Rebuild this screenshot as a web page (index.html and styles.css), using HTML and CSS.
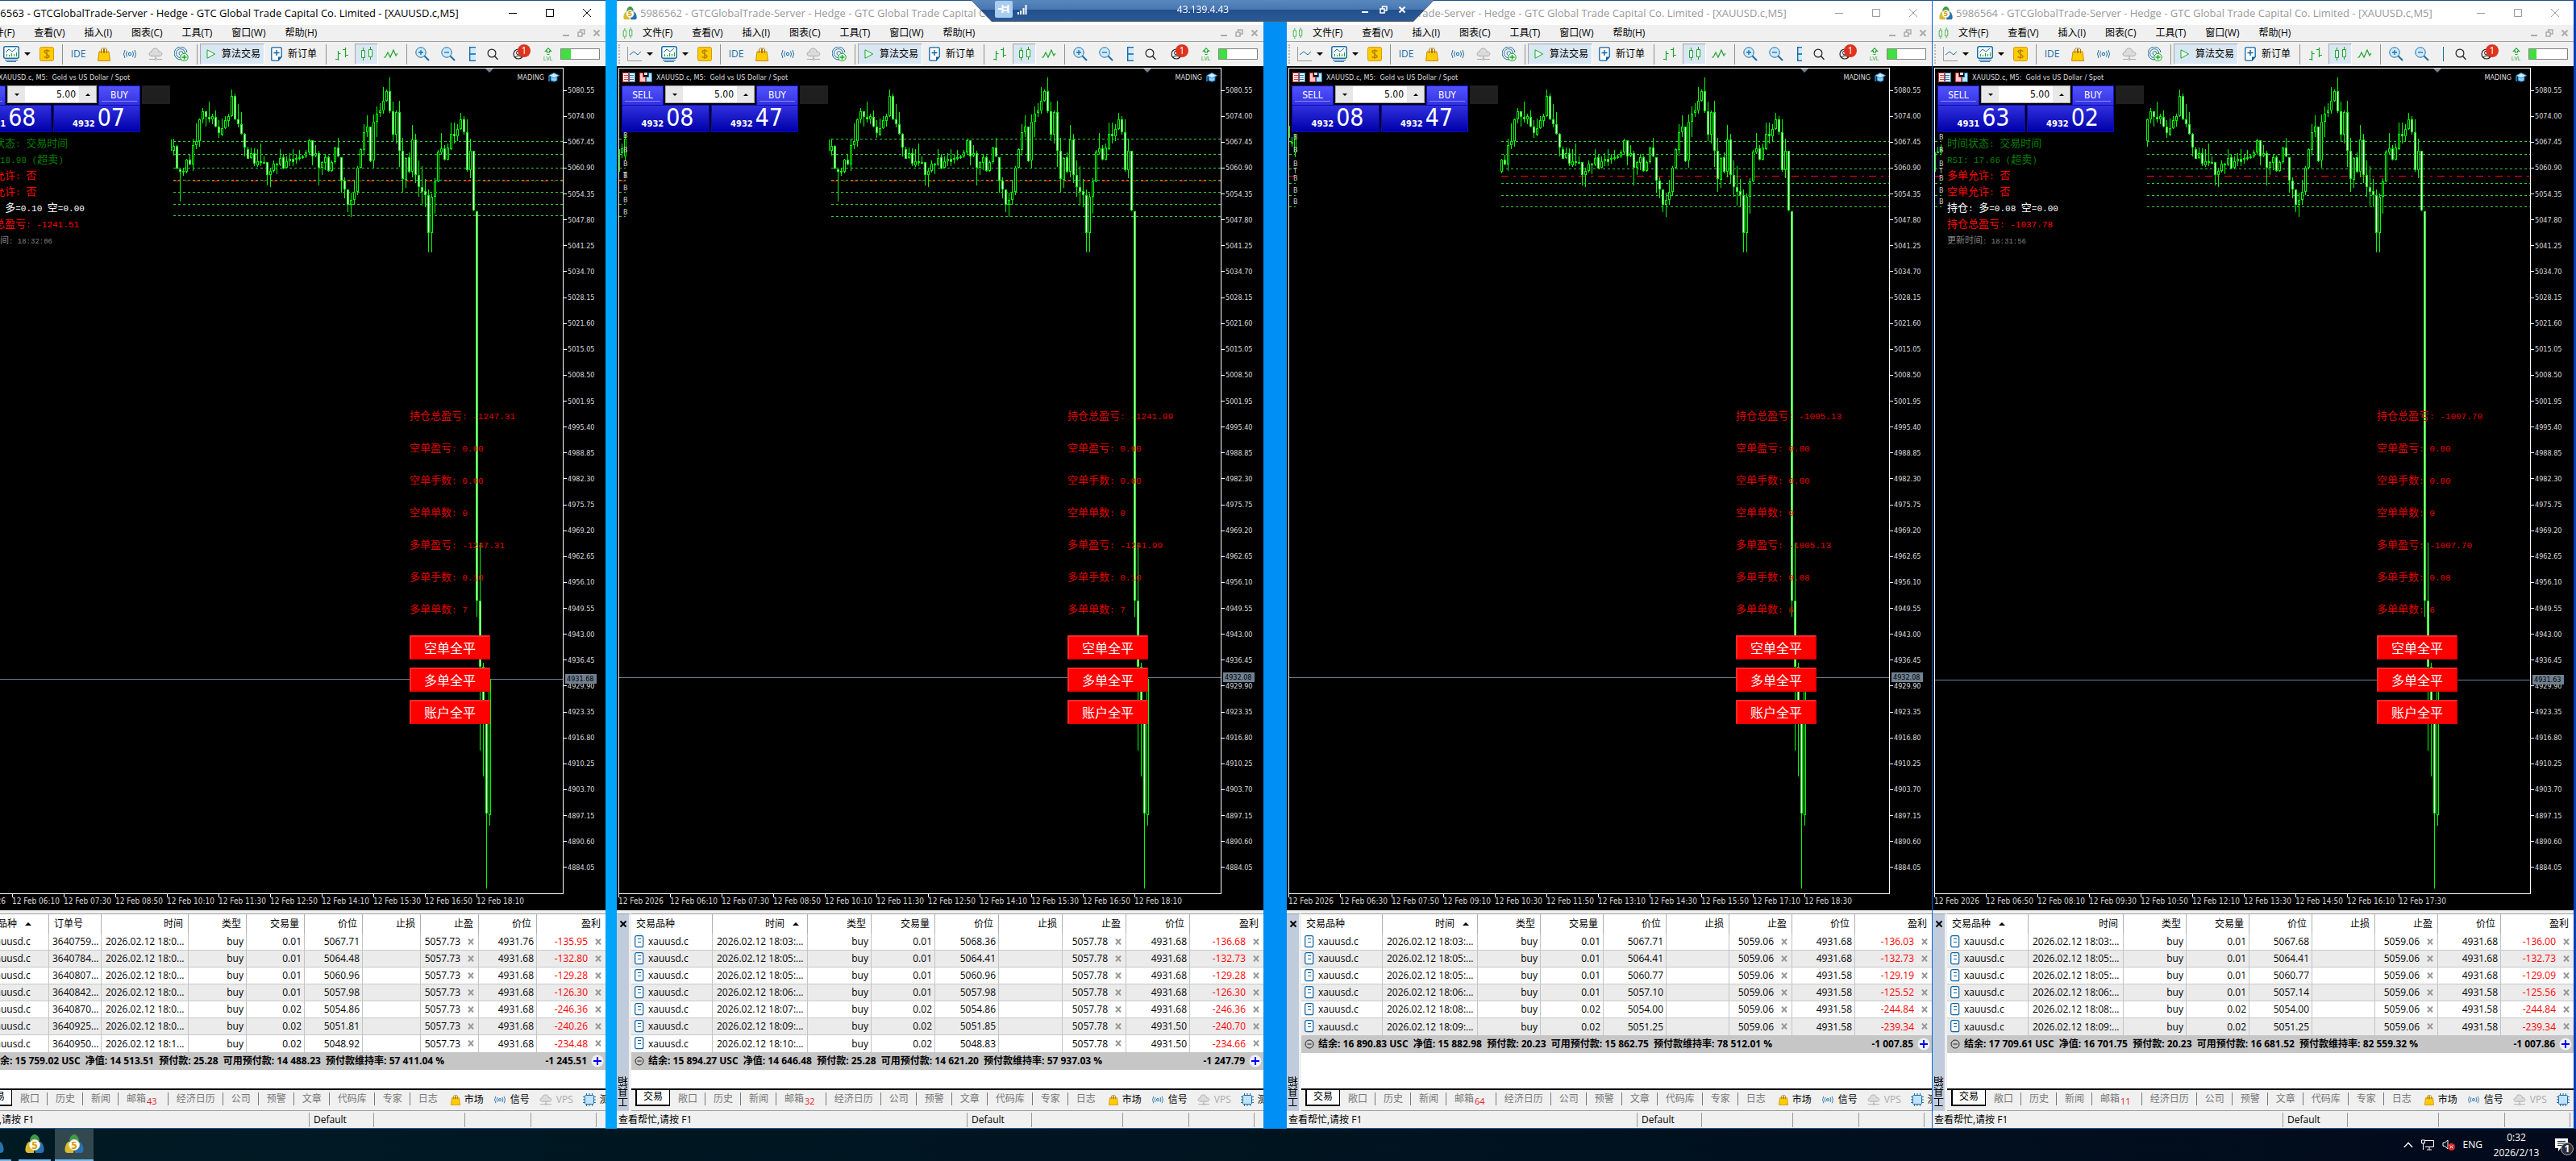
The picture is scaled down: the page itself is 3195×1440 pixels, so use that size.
FILE: index.html
```html
<!DOCTYPE html>
<html lang="zh-CN">
<head>
<meta charset="utf-8">
<title>MetaTrader 5</title>
<link rel="stylesheet" href="styles.css">
</head>
<body>
<svg class="sprite" aria-hidden="true">
  <symbol id="i-logo" viewBox="0 0 24 24"><path d="M12 0c3 0 6 4 6 8l-6 5-6-5c0-4 3-8 6-8z" fill="#3f9a49"/><path d="M5 9l7 4-1 10H4c-4 0-4-4-3-8 1-3 2-5 4-6z" fill="#d9bb2c"/><path d="M19 9l-7 4 1 10h7c4 0 4-4 3-8-1-3-2-5-4-6z" fill="#2673b0"/><circle cx="12" cy="13" r="6.500" fill="#fff" stroke="#e3d9b0"/><text x="12" y="17.500" text-anchor="middle" font-size="13" font-weight="700" font-family="Open Sans" fill="#d99a00">5</text></symbol>
  <symbol id="i-candles" viewBox="0 0 16 18"><path d="M3.500 1v3m0 10v3M12.500 0v3m0 10v3" stroke="#1aa52b" fill="none"/><path d="M1.500 4.500h4v9h-4zM10.500 3.500h4v9h-4z" stroke="#1aa52b" fill="#fff"/></symbol>
  <symbol id="i-line" viewBox="0 0 18 18"><path d="M.5 0v17.500H18" stroke="#9a9a9a" fill="none"/><path d="M3 10l5-4 5 4 4-4" stroke="#1c6ea4" fill="none"/></symbol>
  <symbol id="i-ind" viewBox="0 0 20 20"><path d="M4 19.500h12M2 17.500h16" stroke="#1c6ea4"/><rect x=".75" y=".75" width="18.500" height="14.500" rx="2" fill="#fff" stroke="#1c6ea4" stroke-width="1.500"/><path d="M3 8l4-4 4 3 5-4" stroke="#1c6ea4" fill="none"/><path d="M4.500 13v-3m3 3v-2m3 2V9m3 4v-3m3 3V8" stroke="#1aa52b"/></symbol>
  <symbol id="i-dollar" viewBox="0 0 18 18"><rect x=".5" y=".5" width="17" height="17" rx="2" fill="#ffcc00" stroke="#d79a00"/><path d="M12 6c0-2-6-2-6 0s6 4 6 6-6 2-6 0M9 3v12" stroke="#b97f00" fill="none" stroke-width="1.400"/></symbol>
  <symbol id="i-bag" viewBox="0 0 16 18"><path d="M2 6h12l1.500 11.500H.5z" fill="#ffcc00" stroke="#c98a00"/><path d="M4.500 8V3q2-3 4 0v5M7.500 8V3q2-3 4 0v5" fill="none" stroke="#a87200"/></symbol>
  <symbol id="i-signal" viewBox="0 0 18 14"><circle cx="9" cy="7" r="1.800" fill="#bfe3fb" stroke="#1c6ea4"/><path d="M5.500 3.500q-2 3.500 0 7M3 2q-3 5 0 10M12.500 3.500q2 3.500 0 7M15 2q3 5 0 10" fill="none" stroke="#1c6ea4"/></symbol>
  <symbol id="i-cloud" viewBox="0 0 18 16"><path d="M4 10.500c-4 0-4-5 0-5 0-6 9-6 9 0 5-1 5 5 1 5z" fill="#dcdcdc" stroke="#a9a9a9"/><path d="M9 10v5M1 14.500h16" stroke="#a9a9a9"/><circle cx="9" cy="14.500" r="1.300" fill="#eee" stroke="#a9a9a9"/></symbol>
  <symbol id="i-radar" viewBox="0 0 18 18"><g fill="none" stroke="#1c6ea4"><path d="M9 16A8 8 0 1 1 16 7"/><path d="M7 13.500A5.500 5.500 0 1 1 13.500 8"/><path d="M7.500 10.500A2.500 2.500 0 1 1 11 8"/></g><circle cx="12.500" cy="13" r="4.700" fill="#e6ffe6" stroke="#1aa52b"/><path d="M12.500 10v6M9.500 13h6" stroke="#1aa52b" stroke-width="1.400"/></symbol>
  <symbol id="i-play" viewBox="0 0 12 12"><path d="M1 .8l9.500 5.200L1 11.200z" fill="#effff0" stroke="#1aa52b"/></symbol>
  <symbol id="i-new" viewBox="0 0 14 18"><path d="M2 .8h10q1.200 0 1.200 1.200v10.500l-4 4.700H2q-1.200 0-1.200-1.200V2Q.8.8 2 .8z" fill="#fff" stroke="#0b63a5" stroke-width="1.300"/><path d="M13 12.500H9V17z" fill="#0b63a5"/><path d="M7 4v7M3.500 7.500h7" stroke="#0b63a5" stroke-width="1.400"/></symbol>
  <symbol id="i-bars" viewBox="0 0 18 18"><path d="M4.500 5v12M4.500 8.500h3M1 15.500h3.500M13.500 1v12M10 3.500h3.500M13.500 10.500H17" stroke="#1aa52b" fill="none" stroke-width="1.200"/></symbol>
  <symbol id="i-wave" viewBox="0 0 18 12"><path d="M0 10h2l3-6 3 6 4-9 3 7 2-3" stroke="#1aa52b" fill="none" stroke-width="1.200"/></symbol>
  <symbol id="i-zin" viewBox="0 0 18 18"><path d="M11 11l6 6" stroke="#1c6ea4" stroke-width="2"/><circle cx="7" cy="7" r="6.200" fill="#cfeaff" stroke="#1c6ea4"/><path d="M7 4v6M4 7h6" stroke="#1c6ea4" stroke-width="1.300"/></symbol>
  <symbol id="i-zout" viewBox="0 0 18 18"><path d="M11 11l6 6" stroke="#1c6ea4" stroke-width="2"/><circle cx="7" cy="7" r="6.200" fill="#cfeaff" stroke="#1c6ea4"/><path d="M4 7h6" stroke="#1c6ea4" stroke-width="1.300"/></symbol>
  <symbol id="i-tile" viewBox="0 0 10 18"><path d="M.7.7h8.600v16.600H.7zM.7 9h8.600" fill="#cfeaff" stroke="#0b63a5" stroke-width="1.300"/></symbol>
  <symbol id="i-search" viewBox="0 0 14 14"><circle cx="6" cy="6" r="4.900" fill="none" stroke="#222" stroke-width="1.200"/><path d="M9.500 9.500L13.500 14" stroke="#222" stroke-width="1.400"/></symbol>
  <symbol id="i-user" viewBox="0 0 14 14"><circle cx="7" cy="7" r="6" fill="none" stroke="#222" stroke-width="1.200"/><circle cx="7" cy="5.500" r="2.500" fill="none" stroke="#222"/><path d="M3 11q4-4 8 0" fill="none" stroke="#222"/></symbol>
  <symbol id="i-up" viewBox="0 0 10 10"><path d="M5 .8l3.600 3.600H6.500V6h-3V4.400H1.400z" fill="none" stroke="#1aa52b" stroke-width="1.100"/><path d="M3.500 8.500h3" stroke="#1aa52b"/></symbol>
  <symbol id="i-book" viewBox="0 0 16 12"><path fill="#fff" d="M0 0h16v12H0z"/><path d="M.5.500h7v11h-7zM2 3.500h5M2 6h5M2 8.500h5" stroke="#d33" fill="none"/><path d="M8.500.5h7v11h-7zM9 3.500h5M9 6h5M9 8.500h5" stroke="#1c6ea4" fill="none"/></symbol>
  <symbol id="i-trade" viewBox="0 0 16 12"><path d="M.5.500h4v5h3v6h-7z" fill="#ffc9c9" stroke="#d33"/><path d="M15.500.500h-4v5h-3v6h7z" fill="#bfe3fb" stroke="#1c6ea4"/><path d="M6 0h4v3H6z" fill="#ddd"/></symbol>
  <symbol id="i-hat" viewBox="0 0 14 12"><path d="M3 5v5q4.500 2.500 8 0V5z" fill="#8fd0fa" stroke="#0b63a5"/><path d="M7 .5l6.500 3.200L7 7 .8 3.700z" fill="#cfeaff" stroke="#2b8fd0"/><path d="M1 4v7" stroke="#2b8fd0" stroke-width="1.500"/></symbol>
  <symbol id="i-doc" viewBox="0 0 12 16"><rect x=".7" y=".7" width="10" height="14" rx="2" fill="#fff" stroke="#0b63a5" stroke-width="1.200"/><path d="M4 4.500h4M4 8.500h4" stroke="#0b63a5"/></symbol>
  <symbol id="i-x" viewBox="0 0 8 8"><path d="M1 .5l6 7M7 .5l-6 7" stroke="currentColor" stroke-width="2"/></symbol>
  <symbol id="i-plus" viewBox="0 0 16 16"><circle cx="8" cy="8" r="7.500" fill="#eef0f8"/><path d="M8 3v10M3 8h10" stroke="#0000f0" stroke-width="2"/></symbol>
  <symbol id="i-minus" viewBox="0 0 12 12"><circle cx="6" cy="6" r="5" fill="none" stroke="#222"/><path d="M3.500 6h5" stroke="#222"/></symbol>
  <symbol id="i-chip" viewBox="0 0 16 16"><path d="M4.500 0v16M8 0v16M11.500 0v16M0 4.500h16M0 8h16M0 11.500h16" stroke="#1c6ea4"/><rect x="2.500" y="2.500" width="11" height="11" rx="1" fill="#bfe3fb" stroke="#1c6ea4"/></symbol>
  <symbol id="w-min" viewBox="0 0 10 10"><path d="M0 5.500h10" stroke="currentColor"/></symbol>
  <symbol id="w-max" viewBox="0 0 10 10"><path d="M.5.500h9v9h-9z" stroke="currentColor" fill="none"/></symbol>
  <symbol id="w-close" viewBox="0 0 10 10"><path d="M0 0l10 10M10 0L0 10" stroke="currentColor"/></symbol>
  <symbol id="w-restore" viewBox="0 0 10 10"><path d="M1 4h5v5H1zM3.500 4V1H9v5H6" stroke="currentColor" stroke-width="1.500" fill="none"/></symbol>
  <symbol id="w-minb" viewBox="0 0 10 10"><path d="M1 8h8" stroke="currentColor" stroke-width="2"/></symbol>
  <symbol id="w-closeb" viewBox="0 0 10 10"><path d="M1.500 1.500l7 7M8.500 1.500l-7 7" stroke="currentColor" stroke-width="2"/></symbol>
  <symbol id="i-pin" viewBox="0 0 14 12"><path d="M0 6h5M5.500 1v10M6 4h6v4H6M12.500 1v10" stroke="#fff" stroke-width="2" fill="none"/></symbol>
  <symbol id="i-strength" viewBox="0 0 12 12"><path d="M1 12V9M4 12V7M7.500 12V4M10.500 12V0" stroke="#fff" stroke-width="2"/></symbol>
  <symbol id="t-up" viewBox="0 0 12 8"><path d="M.8 7L6 1.500 11.200 7" stroke="#fff" fill="none" stroke-width="1.300"/></symbol>
  <symbol id="t-net" viewBox="0 0 16 14"><path d="M4 1.500h11.500v8H5M10 10v3M7 13h6M.5 1h4v4h-4zM2.500 5v8" stroke="#fff" fill="none"/></symbol>
  <symbol id="t-vol" viewBox="0 0 16 14"><path d="M1 4.500h2l4-3.500v11L3 8.500H1z" stroke="#fff" fill="none"/><circle cx="11.500" cy="9.500" r="4.500" fill="#d92b2b"/><path d="M9.700 7.700l3.600 3.600m0-3.600l-3.600 3.600" stroke="#fff"/></symbol>
  <symbol id="t-note" viewBox="0 0 16 16"><path d="M0 0h16v12H7l-3 4v-4H0z" fill="#fff"/><path d="M3 3.500h10M3 6h10M3 8.500h7" stroke="#0a1220"/></symbol>
</svg>

<main class="desktop" id="desktop"></main>

<div class="rdp">
  <div class="rdp-bar">
    <button class="rdp-pin" aria-label="固定"><svg width="14" height="12"><use href="#i-pin"/></svg></button>
    <svg class="rdp-sig" width="12" height="12"><use href="#i-strength"/></svg>
    <span class="rdp-ip">43.139.4.43</span>
    <button aria-label="最小化"><svg width="10" height="10"><use href="#w-minb"/></svg></button>
    <button aria-label="还原"><svg width="10" height="10"><use href="#w-restore"/></svg></button>
    <button aria-label="关闭"><svg width="10" height="10"><use href="#w-closeb"/></svg></button>
  </div>
</div>

<footer class="taskbar">
  <button class="task task-cut" aria-label="MetaTrader 5"><svg width="24" height="24"><use href="#i-logo"/></svg></button>
  <button class="task" aria-label="MetaTrader 5"><svg width="24" height="24"><use href="#i-logo"/></svg></button>
  <button class="task task-on" aria-label="MetaTrader 5"><svg width="24" height="24"><use href="#i-logo"/></svg></button>
  <div class="tray">
    <svg width="12" height="8"><use href="#t-up"/></svg>
    <svg width="16" height="14"><use href="#t-net"/></svg>
    <svg width="16" height="14"><use href="#t-vol"/></svg>
    <span>ENG</span>
    <div class="clock"><time>0:32</time><span>2026/2/13</span></div>
    <div class="note"><svg width="16" height="16"><use href="#t-note"/></svg><b>1</b></div>
  </div>
</footer>
<script src="app.js"></script>
</body>
</html>
```
FILE: styles.css
```css
* { box-sizing: border-box; }
body {
  margin: 0; height: 100vh; overflow: hidden; display: flex; flex-direction: column;
  font: 12px/16px "Open Sans", "Noto Sans CJK SC", sans-serif; color: #000; background: #001722;
}
button { font: inherit; color: inherit; background: none; border: 0; padding: 0; flex: none; }
svg { flex: none; display: block; }
.sprite { position: absolute; width: 0; height: 0; }

.desktop {
  flex: 1; min-height: 0; display: flex; padding-right: 3px; overflow: hidden;
  background: linear-gradient(90deg, #00a8ff 0, #00a4fa 24%, #008ff5 50%, #0a3fb8 100%);
}
.win {
  flex: 802 1 0; min-width: 0; display: flex; flex-direction: column; overflow: hidden;
  background: #f0f0f0; border-top: 1px solid #1f4f86; border-bottom: 1px solid #1f5f96;
}
.win-1 { margin: 0 14px 0 -51px; }
.win-2 { margin-right: 29px; }
.win-3 { flex-grow: 800; margin-right: 1px; }
.win-4 { flex-grow: 795; }

.title { display: flex; align-items: center; height: 30px; background: #fff; color: #999; padding-left: 8px; }
.win-1 .title { color: #000; }
.title h1 { flex: 1; margin: 0 0 0 4px; font-size: 13px; line-height: 20px; font-weight: 400; white-space: nowrap; overflow: hidden; }
.title button { width: 46px; height: 30px; display: grid; place-items: center; }

.menu { display: flex; align-items: center; gap: 24px; height: 21px; padding-left: 7px; border-bottom: 1px solid #a0a0a0; }
.menu > svg { margin-right: -12px; }
.menu .mdi { margin-left: auto; display: flex; gap: 9px; padding-right: 6px; color: #aaa; }

.tools { display: flex; height: 30px; background: #f0f0f0; }
.tools-main { flex: 1; min-width: 0; overflow: hidden; display: flex; align-items: center; padding-left: 8px; }
.tools-main::before { content: ""; flex: none; width: 0; height: 24px; margin: 0 3px 0 -6px; border-left: 2px dotted #bbb; }
.tb { height: 26px; display: flex; align-items: center; justify-content: center; width: 32px; color: #1c6ea4; }
.tb-drop { width: 43px; gap: 6px; }
.tb-drop::after { content: ""; border: 4px solid transparent; border-top-color: #000; border-bottom: 0; }
.tb-text { width: auto; gap: 7px; color: #000; padding: 0 8px; white-space: nowrap; }
.tb-on { background: #d9e6f3; border: 1px solid #a8a8a8; border-right-color: #fff; border-bottom-color: #fff; }
.tb-text.tb-on { padding: 0 4px 0 7px; }
.tb-narrow { width: 29px; }
.sep { flex: none; width: 1px; height: 25px; background: #909090; margin: 0 3px; }
.tools-side { flex: none; width: 161px; display: flex; align-items: center; padding: 0 7px 0 14px; }
.tools-side .who { position: relative; margin-left: 18px; width: 22px; }
.tools-side .who b { position: absolute; left: 6px; top: -5px; width: 16px; height: 16px; border-radius: 8px; background: #e0321e; color: #fff; font-weight: 400; text-align: center; }
.lvl { display: grid; justify-items: center; margin-left: 14px; width: 15px; color: #1aa52b; font-size: 7px; line-height: 7px; }
.gauge { margin-left: auto; width: 49px; height: 14px; border: 1px solid #808080; background: #fff; }
.gauge i { display: block; height: 100%; background: #40e040; }

.chart {
  flex: 1; min-height: 0; background: #000; color: #ddd; padding: 2px 0 0 2px;
  display: grid; grid-template: 1fr 20px / 1fr 52px;
  font: 9px/12px "DejaVu Sans Condensed", "Noto Sans CJK SC", sans-serif; overflow: hidden;
}
.win-4 .chart { grid-template-columns: 1fr 53px; }
.frame { position: relative; border: 1px solid #fff; min-height: 0; }
.plot { position: absolute; inset: 0; width: 100%; height: 100%; }
.plot text { font: 9px "DejaVu Sans Condensed", sans-serif; fill: #ccc; }
.plot .g { stroke: #32cd32; stroke-dasharray: 3 3; }
.plot .r { stroke: #f00; stroke-dasharray: 9 6 3 6; }
.plot .now { stroke: #708090; }
.plot .c { stroke: #0f0; fill: #000; }
.plot .f { fill: #fff; }
.chead { position: absolute; left: 4px; right: 4px; top: 4px; display: flex; align-items: center; gap: 5px; height: 14px; }
.chead .sym { white-space: pre; }
.chead .ea { margin-left: auto; }
.order { position: absolute; left: 3px; top: 21px; display: flex; gap: 2px; align-items: flex-start; }
.ticket { display: grid; grid-template-columns: 52px minmax(0, 1fr) 52px; width: 219px; color: #fff; font-size: 12px; }
.ticket > button { height: 24px; background: linear-gradient(#5252ff, #3232e0); border: 1px solid #1414c0; border-bottom: 0; }
.ticket > button::after { content: ""; display: block; margin: 1px 3px 0; border-bottom: 1px solid #8a8aff; }
.spin { display: flex; height: 22px; margin: 0 2px; border: 1px solid #aaa; min-width: 0; }
.spin button { width: 21px; background: #e8e8e8; display: grid; place-items: center; }
.spin button::after { content: ""; border: 3px solid transparent; border-top-color: #000; border-bottom: 0; }
.spin .inc::after { transform: rotate(180deg); }
.spin input { flex: 1; width: 0; min-width: 0; border: 0; padding: 0 4px; text-align: right; font: 12px "DejaVu Sans Condensed", sans-serif; }
.quotes { grid-column: 1 / -1; display: grid; grid-template-columns: 1fr 1fr; gap: 2px; }
.quotes div { height: 34px; background: linear-gradient(#3030e0, #0000a8); border: 1px solid #0a0ab4; display: flex; align-items: flex-end; justify-content: flex-end; gap: 3px; padding: 0 18px 3px 0; }
.quotes b { font-size: 11px; line-height: 13px; }
.quotes span { font-size: 30px; line-height: 28px; }
.stub { width: 35px; height: 23px; background: #1f1f1f; }
.info { position: absolute; left: 15px; top: 82px; font: 13px/20px "Noto Sans CJK SC", sans-serif; color: #f00; white-space: pre; }
.info p, .stats p { margin: 0; height: 20px; }
.info .ok { color: #008000; }
.info .pos { color: #fff; }
.info .upd { color: #808080; font-size: 11px; }
.info .upd .m { font-size: 9px; }
.m { font-family: "Liberation Mono", monospace; font-size: 11px; }
.stats { position: absolute; right: 90px; top: 420px; width: 100px; color: #e00000; font: 13px/20px "Noto Sans CJK SC", sans-serif; white-space: pre; display: grid; gap: 20px; }
.acts { position: absolute; right: 90px; top: 703px; width: 100px; display: grid; gap: 10px; }
.acts button { height: 30px; background: #f00; border: 2px solid #e80000; border-left-color: #ff2a2a; border-top-color: #ff2a2a; color: #fff; font: 16px/20px "Noto Sans CJK SC", sans-serif; }
.axis { position: relative; margin: 0; padding: 22px 0 27px; list-style: none; display: flex; flex-direction: column; justify-content: space-between; }
.axis li { display: flex; align-items: center; gap: 1px; }
.axis li::before { content: ""; width: 4px; height: 1px; background: #fff; }
.axis .tag { position: absolute; left: 2px; padding: 0 2px; background: #708090; color: #000; height: 12px; width: 39px; }
.days { grid-column: 1 / -1; margin: 0; padding: 0; list-style: none; display: flex; font-size: 10px; }
.days li { flex: none; width: 64px; padding-top: 3px; position: relative; white-space: nowrap; }
.days li::before { content: ""; position: absolute; left: 0; top: 0; height: 4px; border-left: 1px solid #fff; }

.box { flex: none; display: grid; grid-template-columns: 18px 1fr; height: 249px; padding-top: 4px; }
.rail { border-top: 1px solid #a0a0a0; background: #c0ccdc; border-right: 3px solid #f0f0f0; display: flex; flex-direction: column; align-items: center; justify-content: space-between; padding: 7px 0 4px; }
.rail span { writing-mode: vertical-rl; transform: rotate(180deg); font-size: 13px; }
.pane { min-width: 0; overflow: hidden; background: #fff; border-top: 1px solid #a0a0a0; display: flex; flex-direction: column; }
table { width: 100%; table-layout: fixed; border-collapse: separate; border-spacing: 0; }
th { height: 24px; font-weight: 400; text-align: right; padding: 0 6px 0 6px; border-right: 1px solid #b0b0b0; white-space: nowrap; }
th:first-child, th.l { text-align: left; }
th i { display: inline-block; margin: 0 4px 2px 10px; border: 4px solid transparent; border-bottom-color: #000; border-top: 0; }
td { height: 21px; line-height: 20px; padding: 0 3px 0 4px; text-align: right; border-right: 1px solid #c4c4c4; border-bottom: 1px solid #c8c8c8; white-space: nowrap; overflow: hidden; }
td.l { text-align: left; }
td.dt { padding-left: 5px; }
th:last-child, td:last-child { border-right: 0; }
tbody tr:nth-child(even) { background: #ebebeb; }
tbody tr:last-child td { border-bottom: 0; }
td svg { display: inline-block; vertical-align: middle; color: #999; }
td .doc { margin: 0 5px 2px 0; }
td .del { margin: 0 2px 2px 9px; }
td.loss { color: #f00; }
.sum { height: 22px; flex: none; display: flex; align-items: center; gap: 5px; padding: 0 2px 0 4px; background: #c6c6c6; font-weight: 700; white-space: pre; }
.sum .tot { margin-left: auto; }
.tabs { flex: none; margin-top: auto; height: 28px; border-top: 2px solid #000; border-bottom: 1px solid #a0a0a0; background: #f0f0f0; display: flex; color: #777; padding-left: 5px; white-space: nowrap; overflow: hidden; }
.tabs button { height: 16px; margin-top: 3px; padding: 0 9px 0 10px; border-right: 1px solid #777; }
.tabs button.on { height: 22px; margin-top: -2px; padding: 0 8px; background: #fff; border: 2px solid #000; border-top: 0; border-width: 0 1px 2px 2px; color: #000; }
.tabs button.end { border-right: 0; padding-right: 16px; }
.tabs sub { color: #e02020; font-size: 11px; line-height: 11px; margin: 0 4px 0 1px; vertical-align: -3px; }
.tabs .svc { border: 0; padding: 0; margin: 4px 12px 0 0; display: flex; align-items: center; gap: 5px; color: #000; }
.tabs .off { color: #aaa; }
.status { flex: none; display: flex; height: 21px; align-items: center; padding-left: 2px; }
.status span { flex: none; height: 18px; line-height: 18px; padding-left: 5px; border-left: 1px solid #999; }
.status .hint { width: 432px; padding: 0; border: 0; }
.status .c1 { width: 80px; }
.status .c2 { width: 113px; }
.status .c3 { width: 82px; }
.status .c4 { width: 81px; }

.rdp { position: absolute; top: 0; left: 1205px; width: 573px; filter: drop-shadow(0 1px 0 #555); }
.rdp-bar {
  height: 26px; display: flex; align-items: center; padding: 0 34px 2px 29px; color: #fff; gap: 6px;
  clip-path: polygon(0 0, 100% 0, calc(100% - 25px) 100%, 25px 100%);
  background: linear-gradient(rgba(90, 140, 195, .94) 0, rgba(70, 120, 185, .94) 12px, rgba(32, 80, 145, .95) 12px, rgba(40, 90, 155, .95) 100%);
}
.rdp-pin { width: 22px; height: 21px; margin-top: -2px; background: #a9cdf0; border-radius: 2px; display: grid; place-items: center; }
.rdp-ip { flex: 1; text-align: center; margin-right: -22px; }
.rdp-bar button + button { margin-left: 7px; }

.taskbar { flex: none; height: 40px; display: flex; background: linear-gradient(90deg, #001a24 0, #001420 50%, #020a1c 100%); color: #fff; }
.task { width: 40px; margin-left: 9px; display: grid; place-items: center; border-bottom: 2px solid #76b9ed; }
.task-cut { width: 34px; margin-left: -20px; justify-items: start; padding-left: 1px; }
.task-on { width: 48px; margin-left: 5px; background: #33474f; }
.tray { margin-left: auto; display: flex; align-items: center; gap: 10px; padding-right: 4px; }
.clock { display: grid; justify-items: center; line-height: 19px; width: 60px; margin-left: 2px; }
.note { position: relative; width: 22px; margin-left: 8px; }
.note b { position: absolute; left: 7px; top: 5px; width: 16px; height: 16px; line-height: 14px; border-radius: 8px; border: 1px solid #aaa; background: #2b3038; text-align: center; }
```
FILE: app.js
```js
// Candles as "high,top,bottom,low" in thirds of a pixel; a trailing f marks a falling bar.
const CANDLES = `336,363,380,398 360,363,447,450f 445,449,458,570f 446,457,460,473 412,415,460,464 395,415,433,435f 337,360,433,455 280,346,361,375 262,265,346,365 222,235,265,280
235,235,256,290f 198,256,265,275f 243,253,265,281 230,256,291,293f 267,291,316,333f 262,298,320,327 253,268,298,300 243,253,270,292 152,177,253,255 168,177,265,267f
207,265,283,293f 237,283,318,320f 315,318,370,402f 367,375,410,412f 370,390,408,412 373,391,430,437f 376,420,435,440 353,420,425,438 402,423,427,430f 423,424,472,510f
445,457,472,516 418,430,457,462 427,430,433,467 375,408,433,437 393,406,447,450f 402,421,443,446 391,411,421,437 375,411,423,437f 394,409,413,430 379,406,412,417
396,402,406,412 378,388,402,408 336,343,388,397 342,343,403,435f 360,391,400,405 382,391,443,510f 420,424,443,470 394,406,427,453 399,406,457,459f 418,424,457,459
366,370,424,430 333,370,403,406f 405,406,492,537f 480,492,526,558f 525,526,583,608f 537,565,583,627 490,535,565,583 438,445,535,546 373,376,445,447 282,312,378,398
249,292,312,330 291,292,421,424f 247,273,418,445 216,243,273,330 204,231,241,255 144,195,231,243 153,159,195,198 108,159,235,239f 198,235,320,345f 231,237,320,354
195,237,382,440f 333,382,487,535f 405,408,490,518 388,406,460,465f 285,340,460,480 318,340,472,501f 418,472,516,552f 438,516,534,585f 487,530,547,590f 525,547,688,760f
541,553,688,760 484,496,553,615 378,384,496,499 315,373,386,394 361,373,415,418f 355,370,415,418 276,319,375,378 276,319,328,355f 282,301,328,345 240,265,301,303
252,265,313,322f 264,313,452,459f 336,382,452,483 382,382,604,606f 606,606,2055,2115f 1838,2055,2301,2613f 2286,2301,2460,2709f 2440,2460,2847,3125f 2346,2346,2852,2893`.split(/\s+/);

const D = '2026.02.12 18:';
const WINDOWS = [
  { id: '5986563', shift: 0, green: [90, 106, 123, 138, 153, 168, 182], red: 139, now: 757, tag: '4931.68', sell: ['4931', '68'], buy: ['4932', '07'], gauge: 12,
    strip: '', marks: [], first: '06:10', n: 10, pl: '-1247.31', lots: '0.10', cnt: '7', mail: '43',
    info: ['18.98', '0.10', '-1241.51', '18:32:06'], cols: [94, 65, 108, 72, 72, 72, 72, 72, 72], sort: 0, tp: '5057.73',
    rows: [['3640759...', '0...', '0.01', '5067.71', '4931.76', '-135.95'], ['3640784...', '0...', '0.01', '5064.48', '4931.68', '-132.80'], ['3640807...', '0...', '0.01', '5060.96', '4931.68', '-129.28'], ['3640842...', '0...', '0.01', '5057.98', '4931.68', '-126.30'], ['3640870...', '0...', '0.02', '5054.86', '4931.68', '-246.36'], ['3640925...', '0...', '0.02', '5051.81', '4931.68', '-240.26'], ['3640950...', '1...', '0.02', '5048.92', '4931.68', '-234.48']],
    sum: '结余: 15 759.02 USC  净值: 14 513.51  预付款: 25.28  可用预付款: 14 488.23  预付款维持率: 57 411.04 %', tot: '-1 245.51' },
  { id: '5986562', shift: 0, green: [87, 106, 123, 138, 153, 168, 183], red: 139, now: 755, tag: '4932.08', sell: ['4932', '08'], buy: ['4932', '47'], gauge: 10,
    strip: '0,100,128 3,93,111 7,81,115', marks: ['B83', 'B101', 'B118', 'T132', 'B133', 'B148', 'B163', 'B178'], first: '06:10', n: 10, pl: '-1241.99', lots: '0.10', cnt: '7', mail: '32',
    cols: [101, 118, 79, 79, 79, 79, 79, 79], sort: 1, tp: '5057.78',
    rows: [['03:...', '0.01', '5068.36', '4931.68', '-136.68'], ['05:...', '0.01', '5064.41', '4931.68', '-132.73'], ['05:...', '0.01', '5060.96', '4931.68', '-129.28'], ['06:...', '0.01', '5057.98', '4931.68', '-126.30'], ['07:...', '0.02', '5054.86', '4931.68', '-246.36'], ['09:...', '0.02', '5051.85', '4931.50', '-240.70'], ['10:...', '0.02', '5048.83', '4931.50', '-234.66']],
    sum: '结余: 15 894.27 USC  净值: 14 646.48  预付款: 25.28  可用预付款: 14 621.20  预付款维持率: 57 937.03 %', tot: '-1 247.79' },
  { id: '5941335', shift: 4, green: [90, 106, 124, 142, 157, 171], red: 133, now: 755, tag: '4932.08', sell: ['4932', '08'], buy: ['4932', '47'], gauge: 12,
    strip: '0,71,86 3,85,97 7,81,110', marks: ['B85', 'B101', 'B118', 'T127', 'B136', 'B151', 'B165'], first: '06:30', n: 10, pl: '-1005.13', lots: '0.08', cnt: '6', mail: '64',
    cols: [101, 118, 78, 78, 78, 78, 78, 78], sort: 1, tp: '5059.06',
    rows: [['03:...', '0.01', '5067.71', '4931.68', '-136.03'], ['05:...', '0.01', '5064.41', '4931.68', '-132.73'], ['05:...', '0.01', '5060.77', '4931.58', '-129.19'], ['06:...', '0.01', '5057.10', '4931.58', '-125.52'], ['08:...', '0.02', '5054.00', '4931.58', '-244.84'], ['09:...', '0.02', '5051.25', '4931.58', '-239.34']],
    sum: '结余: 16 890.83 USC  净值: 15 882.98  预付款: 20.23  可用预付款: 15 862.75  预付款维持率: 78 512.01 %', tot: '-1 007.85' },
  { id: '5986564', shift: 8, green: [90, 106, 124, 142, 157, 171], red: 133, now: 758, tag: '4931.63', sell: ['4931', '63'], buy: ['4932', '02'], gauge: 9,
    strip: '0,104,128 3,97,105 7,94,107', marks: ['B85', 'B101', 'B118', 'T127', 'B136', 'B151', 'B165'], first: '06:50', n: 9, pl: '-1007.70', lots: '0.08', cnt: '6', mail: '11',
    info: ['17.66', '0.08', '-1037.78', '18:31:56'], cols: [101, 118, 78, 78, 78, 78, 78, 78], sort: 0, tp: '5059.06',
    rows: [['03:...', '0.01', '5067.68', '4931.68', '-136.00'], ['05:...', '0.01', '5064.41', '4931.68', '-132.73'], ['05:...', '0.01', '5060.77', '4931.68', '-129.09'], ['06:...', '0.01', '5057.14', '4931.58', '-125.56'], ['08:...', '0.02', '5054.00', '4931.58', '-244.84'], ['09:...', '0.02', '5051.25', '4931.58', '-239.34']],
    sum: '结余: 17 709.61 USC  净值: 16 701.75  预付款: 20.23  可用预付款: 16 681.52  预付款维持率: 82 559.32 %', tot: '-1 007.86' },
];

const icon = (id, w, h, cls = '') => `<svg class="${cls}" width="${w}" height="${h}"><use href="#${id}"/></svg>`;
const mono = s => s.replace(/[\x20-\x7e]+/g, t => `<span class="m">${t}</span>`);
const tool = (label, inner, cls = '') => `<button class="tb ${cls}" aria-label="${label}">${inner}</button>`;
const SEP = '<i class="sep"></i>';

function candle(x, h, t, b, l, f) {
  return `<path class="c" d="M${x}.5 ${h}V${l}"/><rect class="c ${f ? 'f' : ''}" x="${x - 1}.5" y="${t}.5" width="2" height="${Math.max(1, b - t - 1)}"/>`;
}
function plot(w) {
  let s = '';
  const rule = (cls, y) => `<path class="${cls}" d="M0 ${y}.5H8"/><line class="${cls}" x1="263" x2="100%" y1="${y}.5" y2="${y}.5"/>`;
  w.green.forEach(y => s += rule('g', y));
  s += rule('r', w.red);
  s += `<line class="now" x1="0" x2="100%" y1="${w.now}.5" y2="${w.now}.5"/>`;
  if (!w.shift) s += '<path class="c" d="M260.500 88v14"/>';
  CANDLES.slice(w.shift).forEach((c, i) => {
    const v = c.replace('f', '').split(',').map(n => Math.round(n / 3) - 25);
    s += candle(263 + i * 4, ...v, c.endsWith('f'));
  });
  if (w.strip) w.strip.split(' ').forEach(c => {
    const [x, a, b] = c.split(',').map(Number);
    s += x ? candle(x, a, a + 6, b - 6, b, false) : `<path class="c" d="M.5 ${a}V${b}"/>`;
  });
  w.marks.forEach(m => s += `<text x="5" y="${+m.slice(1) + 3}">${m[0]}</text>`);
  const tx = 655 - w.shift * 4;
  return `<svg class="plot">${s}<path d="M${tx - 5} 0h10l-5 5z" fill="#708090"/></svg>`;
}
function days(w) {
  const [h, m] = w.first.split(':').map(Number);
  let s = '<li>12 Feb 2026</li>';
  for (let i = 0; i < w.n; i++) {
    const t = h * 60 + m + i * 80;
    s += `<li>12 Feb ${String(t / 60 | 0).padStart(2, '0')}:${String(t % 60).padStart(2, '0')}</li>`;
  }
  return s;
}
function axis(w) {
  let s = '';
  for (let i = 0; i < 31; i++) s += `<li>${(5080.55 - i * 6.55).toFixed(2)}</li>`;
  return s + `<div class="tag" style="top:${w.now - 5}px">${w.tag}</div>`;
}
function info(w) {
  if (!w.info) return '';
  const [rsi, lots, pl, at] = w.info;
  return `<div class="info"><p class="ok">${mono('时间状态: 交易时间')}</p><p class="ok">${mono(`RSI: ${rsi} (超卖)`)}</p><p>${mono('多单允许: 否')}</p><p>${mono('空单允许: 否')}</p><p class="pos">${mono(`持仓: 多=${lots} 空=0.00`)}</p><p>${mono('持仓总盈亏: ' + pl)}</p><p class="upd">${mono('更新时间: ' + at)}</p></div>`;
}
function table(w) {
  const order = w.cols.length === 9;
  const heads = ['交易品种', ...(order ? ['订单号'] : []), '时间', '类型', '交易量', '价位', '止损', '止盈', '价位', '盈利'];
  const th = heads.map((h, i) => `<th class="${order && i === 1 ? 'l' : ''}">${h}${i === w.sort ? '<i></i>' : ''}</th>`).join('');
  const tr = w.rows.map(r => {
    const q = [...r];
    const ticket = order ? `<td class="l">${q.shift()}</td>` : '';
    const [t, vol, open, cur, pl] = q;
    return `<tr><td class="l">${icon('i-doc', 12, 16, 'doc')}xauusd.c</td>${ticket}<td class="l dt">${D}${t}</td><td>buy</td><td>${vol}</td><td>${open}</td><td></td><td>${w.tp}${icon('i-x', 8, 8, 'del')}</td><td>${cur}</td><td class="loss">${pl}${icon('i-x', 8, 8, 'del')}</td></tr>`;
  }).join('');
  return `<table><colgroup>${w.cols.map(c => `<col style="width:${c}px">`).join('')}<col></colgroup><thead><tr>${th}</tr></thead><tbody>${tr}</tbody></table>`;
}
function render(w, i) {
  const stats = ['持仓总盈亏: ' + w.pl, '空单盈亏: 0.00', '空单手数: 0.00', '空单单数: 0', '多单盈亏: ' + w.pl, '多单手数: ' + w.lots, '多单单数: ' + w.cnt];
  return `<section class="win win-${i + 1}">
  <header class="title">${icon('i-logo', 17, 17)}<h1>${w.id} - GTCGlobalTrade-Server - Hedge - GTC Global Trade Capital Co. Limited - [XAUUSD.c,M5]</h1>
    <button aria-label="最小化">${icon('w-min', 10, 10)}</button><button aria-label="最大化">${icon('w-max', 10, 10)}</button><button aria-label="关闭">${icon('w-close', 10, 10)}</button></header>
  <nav class="menu">${icon('i-candles', 13, 15)}${['文件(F)', '查看(V)', '插入(I)', '图表(C)', '工具(T)', '窗口(W)', '帮助(H)'].map(m => `<button>${m}</button>`).join('')}
    <div class="mdi">${icon('w-minb', 10, 10)}${icon('w-restore', 10, 10)}${icon('w-closeb', 10, 10)}</div></nav>
  <div class="tools"><div class="tools-main">
    ${tool('图表类型', icon('i-line', 18, 18), 'tb-drop')}${tool('指标', icon('i-ind', 20, 20), 'tb-drop')}${tool('价格', icon('i-dollar', 18, 18))}${SEP}${tool('编辑器', 'IDE')}${tool('市场', icon('i-bag', 16, 18))}${tool('信号', icon('i-signal', 18, 14))}${tool('VPS', icon('i-cloud', 18, 16))}${tool('雷达', icon('i-radar', 18, 18))}${SEP}
    ${tool('算法交易', icon('i-play', 12, 12) + '算法交易', 'tb-text tb-on')}${tool('新订单', icon('i-new', 14, 18) + '新订单', 'tb-text')}${SEP}
    ${tool('柱形图', icon('i-bars', 18, 18))}${tool('蜡烛图', icon('i-candles', 16, 18), 'tb-on tb-narrow')}${tool('折线图', icon('i-wave', 18, 12))}${SEP}
    ${tool('放大', icon('i-zin', 18, 18))}${tool('缩小', icon('i-zout', 18, 18))}${tool('平铺', icon('i-tile', 10, 18), 'tb-narrow')}
  </div><div class="tools-side">${icon('i-search', 14, 14)}<div class="who">${icon('i-user', 14, 14)}<b>1</b></div><div class="lvl">${icon('i-up', 10, 10)}LVL</div><div class="gauge"><i style="width:${w.gauge}px"></i></div></div></div>
  <div class="chart"><div class="frame">${plot(w)}
    <div class="chead">${icon('i-book', 16, 12)}${icon('i-trade', 16, 12)}<span class="sym">XAUUSD.c, M5:  Gold vs US Dollar / Spot</span><span class="ea">MADING</span>${icon('i-hat', 14, 12)}</div>
    <div class="order"><div class="ticket"><button>SELL</button><div class="spin"><button aria-label="减少"></button><input aria-label="手数" value="5.00"><button class="inc" aria-label="增加"></button></div><button>BUY</button>
      <div class="quotes"><div><b>${w.sell[0]}</b><span>${w.sell[1]}</span></div><div><b>${w.buy[0]}</b><span>${w.buy[1]}</span></div></div></div><div class="stub"></div></div>
    ${info(w)}
    <div class="stats">${stats.map(t => `<p>${mono(t)}</p>`).join('')}</div>
    <div class="acts"><button>空单全平</button><button>多单全平</button><button>账户全平</button></div>
  </div><ul class="axis">${axis(w)}</ul><ul class="days">${days(w)}</ul></div>
  <div class="box"><div class="rail">${icon('w-closeb', 10, 10)}<span>工具箱</span></div><div class="pane">${table(w)}
    <div class="sum">${icon('i-minus', 12, 12)}<span>${w.sum}</span><span class="tot">${w.tot}</span>${icon('i-plus', 16, 16)}</div>
    <div class="tabs"><button class="on">交易</button>${['敞口', '历史', '新闻', `邮箱<sub>${w.mail}</sub>`, '经济日历', '公司', '预警', '文章', '代码库', '专家'].map(t => `<button>${t}</button>`).join('')}<button class="end">日志</button>
      <button class="svc">${icon('i-bag', 12, 14)}市场</button><button class="svc">${icon('i-signal', 16, 12)}信号</button><button class="svc off">${icon('i-cloud', 16, 14)}VPS</button><button class="svc">${icon('i-chip', 16, 16)}测试</button></div>
  </div></div>
  <div class="status"><span class="hint">查看帮忙,请按 F1</span><span class="c1">Default</span><span class="c2"></span><span class="c3"></span><span class="c4"></span><span></span></div>
</section>`;
}
document.getElementById('desktop').innerHTML = WINDOWS.map(render).join('');
```
